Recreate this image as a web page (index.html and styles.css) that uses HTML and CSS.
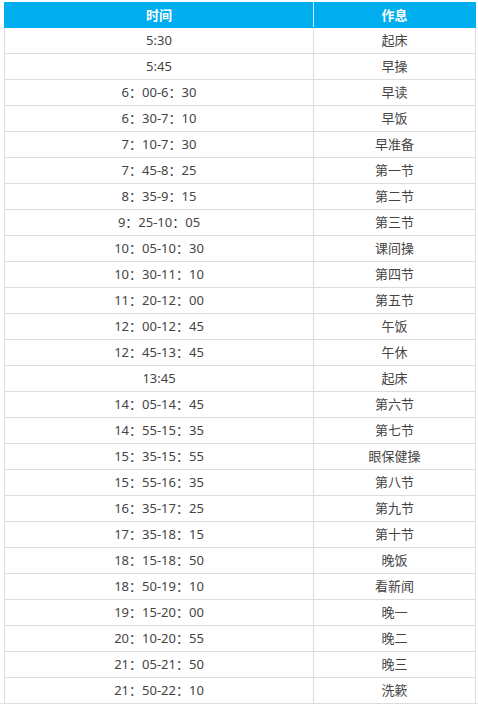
FILE: index.html
```html
<!DOCTYPE html>
<html lang="zh-CN">
<head>
<meta charset="utf-8">
<title>作息时间表</title>
<link rel="stylesheet" href="styles.css">
</head>
<body>
<div class="page">
<table class="schedule">
<thead>
<tr><th class="c-time">时间</th><th class="c-act">作息</th></tr>
</thead>
<tbody>
<tr><td>5:30</td><td>起床</td></tr>
<tr><td>5:45</td><td>早操</td></tr>
<tr><td>6：00-6：30</td><td>早读</td></tr>
<tr><td>6：30-7：10</td><td>早饭</td></tr>
<tr><td>7：10-7：30</td><td>早准备</td></tr>
<tr><td>7：45-8：25</td><td>第一节</td></tr>
<tr><td>8：35-9：15</td><td>第二节</td></tr>
<tr><td>9：25-10：05</td><td>第三节</td></tr>
<tr><td>10：05-10：30</td><td>课间操</td></tr>
<tr><td>10：30-11：10</td><td>第四节</td></tr>
<tr><td>11：20-12：00</td><td>第五节</td></tr>
<tr><td>12：00-12：45</td><td>午饭</td></tr>
<tr><td>12：45-13：45</td><td>午休</td></tr>
<tr><td>13:45</td><td>起床</td></tr>
<tr><td>14：05-14：45</td><td>第六节</td></tr>
<tr><td>14：55-15：35</td><td>第七节</td></tr>
<tr><td>15：35-15：55</td><td>眼保健操</td></tr>
<tr><td>15：55-16：35</td><td>第八节</td></tr>
<tr><td>16：35-17：25</td><td>第九节</td></tr>
<tr><td>17：35-18：15</td><td>第十节</td></tr>
<tr><td>18：15-18：50</td><td>晚饭</td></tr>
<tr><td>18：50-19：10</td><td>看新闻</td></tr>
<tr><td>19：15-20：00</td><td>晚一</td></tr>
<tr><td>20：10-20：55</td><td>晚二</td></tr>
<tr><td>21：05-21：50</td><td>晚三</td></tr>
<tr><td>21：50-22：10</td><td>洗簌</td></tr>
</tbody>
</table>
</div>
</body>
</html>
```

FILE: styles.css
```css
html, body {
  margin: 0;
  padding: 0;
  background: #ffffff;
}

.page {
  padding: 2px 0 0 4px;
  height: 701px;
  border-bottom: 1px solid #e6e6e6;
}

.schedule {
  border-collapse: collapse;
  width: 472px;
  table-layout: fixed;
  font-family: "Microsoft YaHei", "Noto Sans", "Noto Sans CJK SC", sans-serif;
  font-size: 13px;
  color: #444444;
}

.schedule th {
  background: #00aeef;
  color: #ffffff;
  font-weight: bold;
  height: 24px;
  padding: 0;
  line-height: 24px;
  border-left: 1px solid #00aeef;
  border-right: 1px solid #00aeef;
  border-top: 1px solid #00aeef;
  border-bottom: 1px solid #00aeef;
  text-align: center;
}

.schedule th.c-time {
  width: 308px;
  border-right: 1px solid #cfeffb;
}

.schedule td {
  height: 25px;
  padding: 0;
  line-height: 25px;
  border: 1px solid #dddddd;
  text-align: center;
}
```
